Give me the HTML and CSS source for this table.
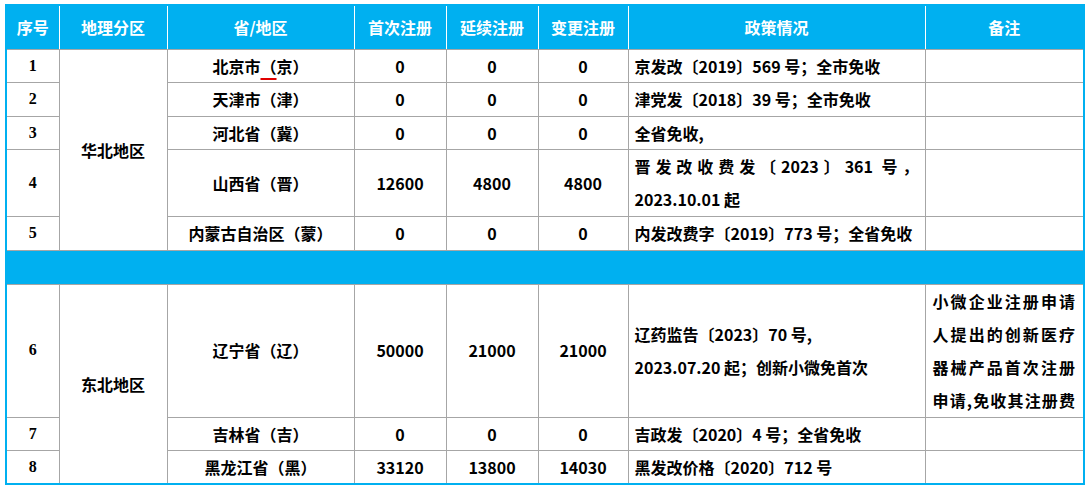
FILE: index.html
```html
<!DOCTYPE html>
<html lang="zh-CN">
<head>
<meta charset="utf-8">
<title>医疗器械注册费政策</title>
<link rel="stylesheet" href="styles.css">
</head>
<body>
<div class="sheet">
<table class="fees">
  <colgroup>
    <col class="c-no">
    <col class="c-zone">
    <col class="c-prov">
    <col class="c-num">
    <col class="c-num">
    <col class="c-num2">
    <col class="c-policy">
    <col class="c-note">
  </colgroup>
  <thead>
    <tr>
      <th>序号</th>
      <th>地理分区</th>
      <th>省/地区</th>
      <th>首次注册</th>
      <th>延续注册</th>
      <th>变更注册</th>
      <th>政策情况</th>
      <th>备注</th>
    </tr>
  </thead>
  <tbody>
    <tr>
      <td class="no">1</td>
      <td class="zone" rowspan="5">华北地区</td>
      <td class="prov">北京市<span class="spell">（</span>京）</td>
      <td class="num">0</td><td class="num">0</td><td class="num">0</td>
      <td class="policy">京发改〔2019〕569 号；全市免收</td>
      <td class="note"></td>
    </tr>
    <tr>
      <td class="no">2</td>
      <td class="prov">天津市（津）</td>
      <td class="num">0</td><td class="num">0</td><td class="num">0</td>
      <td class="policy">津党发〔2018〕39 号；全市免收</td>
      <td class="note"></td>
    </tr>
    <tr>
      <td class="no">3</td>
      <td class="prov">河北省（冀）</td>
      <td class="num">0</td><td class="num">0</td><td class="num">0</td>
      <td class="policy">全省免收,</td>
      <td class="note"></td>
    </tr>
    <tr>
      <td class="no">4</td>
      <td class="prov">山西省（晋）</td>
      <td class="num">12600</td><td class="num">4800</td><td class="num">4800</td>
      <td class="policy multi justify">晋发改收费发〔2023〕361 号，2023.10.01 起</td>
      <td class="note"></td>
    </tr>
    <tr>
      <td class="no">5</td>
      <td class="prov">内蒙古自治区（蒙）</td>
      <td class="num">0</td><td class="num">0</td><td class="num">0</td>
      <td class="policy">内发改费字〔2019〕773 号；全省免收</td>
      <td class="note"></td>
    </tr>
    <tr class="band">
      <td colspan="8"></td>
    </tr>
    <tr>
      <td class="no">6</td>
      <td class="zone" rowspan="3">东北地区</td>
      <td class="prov">辽宁省（辽）</td>
      <td class="num">50000</td><td class="num">21000</td><td class="num">21000</td>
      <td class="policy multi">辽药监告〔2023〕70 号,<br>2023.07.20 起；创新小微免首次</td>
      <td class="note multi">小微企业注册申请人提出的创新医疗器械产品首次注册申请,免收其注册费</td>
    </tr>
    <tr>
      <td class="no">7</td>
      <td class="prov">吉林省（吉）</td>
      <td class="num">0</td><td class="num">0</td><td class="num">0</td>
      <td class="policy">吉政发〔2020〕4 号；全省免收</td>
      <td class="note"></td>
    </tr>
    <tr>
      <td class="no">8</td>
      <td class="prov">黑龙江省（黑）</td>
      <td class="num">33120</td><td class="num">13800</td><td class="num">14030</td>
      <td class="policy">黑发改价格〔2020〕712 号</td>
      <td class="note"></td>
    </tr>
  </tbody>
</table>
</div>
</body>
</html>
```

FILE: styles.css
```css
html, body {
  margin: 0;
  padding: 0;
  background: #ffffff;
}

.sheet {
  padding: 4px 0 0 5px;
}

.fees {
  border-collapse: collapse;
  table-layout: fixed;
  width: 1079px;
  border: 2px solid #00b0f0;
  font-family: "Noto Sans CJK SC", "Noto Sans", sans-serif;
  font-size: 16px;
  font-weight: 700;
  color: #000;
}

.c-no { width: 53px; }
.c-zone { width: 108px; }
.c-prov { width: 187px; }
.c-num { width: 92px; }
.c-num2 { width: 90px; }
.c-policy { width: 297px; }
.c-note { width: 159px; }

.fees th {
  background: #00b0f0;
  color: #fff;
  font-weight: 700;
  line-height: 43px;
  padding: 0;
  text-align: center;
  border-top: 2px solid #00b0f0;
  border-left: 1px solid #ffffff;
  border-right: 1px solid #ffffff;
  border-bottom: 1px solid #a6a6a6;
}

.fees td {
  border: 1px solid #a6a6a6;
  padding: 0;
  line-height: 32.4px;
  vertical-align: middle;
  text-align: center;
  white-space: nowrap;
}

.fees td.no {
  font-family: "Liberation Serif", "Times New Roman", serif;
}

.fees td.policy {
  text-align: left;
  padding: 0 6px 0 6px;
}

.fees td.multi {
  line-height: 33px;
  white-space: normal;
}

.fees td.justify {
  text-align: justify;
  text-justify: inter-character;
}

.fees td.note {
  padding: 0 8px 0 7px;
  text-align: justify;
  text-align-last: justify;
}

.fees tr.band td {
  background: #00b0f0;
  height: 33px;
  line-height: 33px;
}

.spell {
  text-decoration: underline;
  text-decoration-color: #e00000;
  text-decoration-thickness: 2px;
  text-underline-offset: 5px;
}
```
